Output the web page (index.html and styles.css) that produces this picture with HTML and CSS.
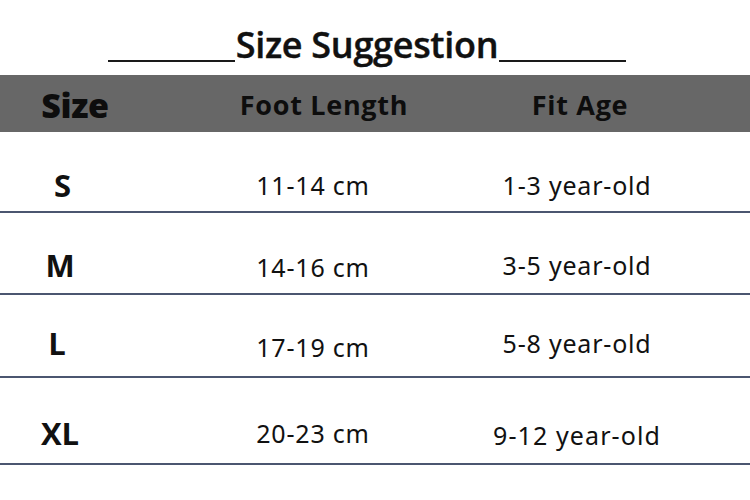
FILE: index.html
```html
<!DOCTYPE html>
<html>
<head>
<meta charset="utf-8">
<link rel="stylesheet" href="styles.css">
</head>
<body>
<div class="page">
  <div class="title-wrap">
    <span class="rule"></span>
    <h1 class="title">Size Suggestion</h1>
    <span class="rule"></span>
  </div>
  <div class="head">
    <div class="hcell h1">Size</div>
    <div class="hcell h2">Foot Length</div>
    <div class="hcell h3">Fit Age</div>
  </div>
  <div class="row r1">
    <div class="cell size">S</div>
    <div class="cell len">11-14 cm</div>
    <div class="cell age">1-3 year-old</div>
  </div>
  <div class="row r2">
    <div class="cell size">M</div>
    <div class="cell len">14-16 cm</div>
    <div class="cell age">3-5 year-old</div>
  </div>
  <div class="row r3">
    <div class="cell size">L</div>
    <div class="cell len">17-19 cm</div>
    <div class="cell age">5-8 year-old</div>
  </div>
  <div class="row r4">
    <div class="cell size">XL</div>
    <div class="cell len">20-23 cm</div>
    <div class="cell age">9-12 year-old</div>
  </div>
</div>
</body>
</html>
```
FILE: styles.css
```css
* { box-sizing: border-box; margin: 0; padding: 0; }
html, body { background: #fff; }
body { width: 750px; height: 500px; overflow: hidden; }
.page { width: 750px; }

.title-wrap {
  height: 75px;
  display: flex;
  justify-content: center;
  align-items: flex-end;
  padding-bottom: 10px;
  padding-right: 16px;
}
.rule {
  width: 127px;
  height: 2px;
  background: #1a1a1a;
  margin-bottom: 3px;
}
.title {
  font-family: "Open Sans", sans-serif;
  font-weight: 600;
  font-size: 36px;
  line-height: 40px;
  color: #111;
  letter-spacing: -0.3px;
  padding: 0 1px;
  -webkit-text-stroke: 0.4px #111;
}

.head {
  height: 57px;
  background: #676767;
  display: grid;
  grid-template-columns: 150px 348px 164px;
  align-items: center;
  padding-top: 2px;
}
.hcell {
  display: flex;
  justify-content: center;
  font-family: "Open Sans", sans-serif;
  font-weight: 700;
  font-size: 27px;
  letter-spacing: 0.7px;
  color: #0d0d0d;
  white-space: nowrap;
}
.h1 { font-weight: 800; font-size: 34px; letter-spacing: -0.4px; }

.row {
  display: grid;
  grid-template-columns: 120px 386px 142px;
  border-bottom: 2px solid #4b5670;
  align-items: start;
}
.r1 { height: 81px; padding-top: 38px; }
.r2 { height: 82px; padding-top: 37px; }
.r3 { height: 83px; padding-top: 33px; }
.r4 { height: 87px; padding-top: 40px; }

.cell {
  display: flex;
  justify-content: center;
  white-space: nowrap;
  height: 30px;
  line-height: 30px;
  color: #111;
}
.size {
  font-family: "Open Sans", sans-serif;
  font-weight: 700;
  font-size: 31px;
}
.r1 .size { margin-left: 5px; }
.len, .age {
  font-family: "Noto Sans", sans-serif;
  font-size: 25px;
  letter-spacing: 0.8px;
}
.r2 .len { margin-top: 2px; }
.r3 .len { margin-top: 4px; }
.r3 .size { margin-left: -6px; }
.r4 .age { margin-top: 2px; letter-spacing: 1.1px; }
```
